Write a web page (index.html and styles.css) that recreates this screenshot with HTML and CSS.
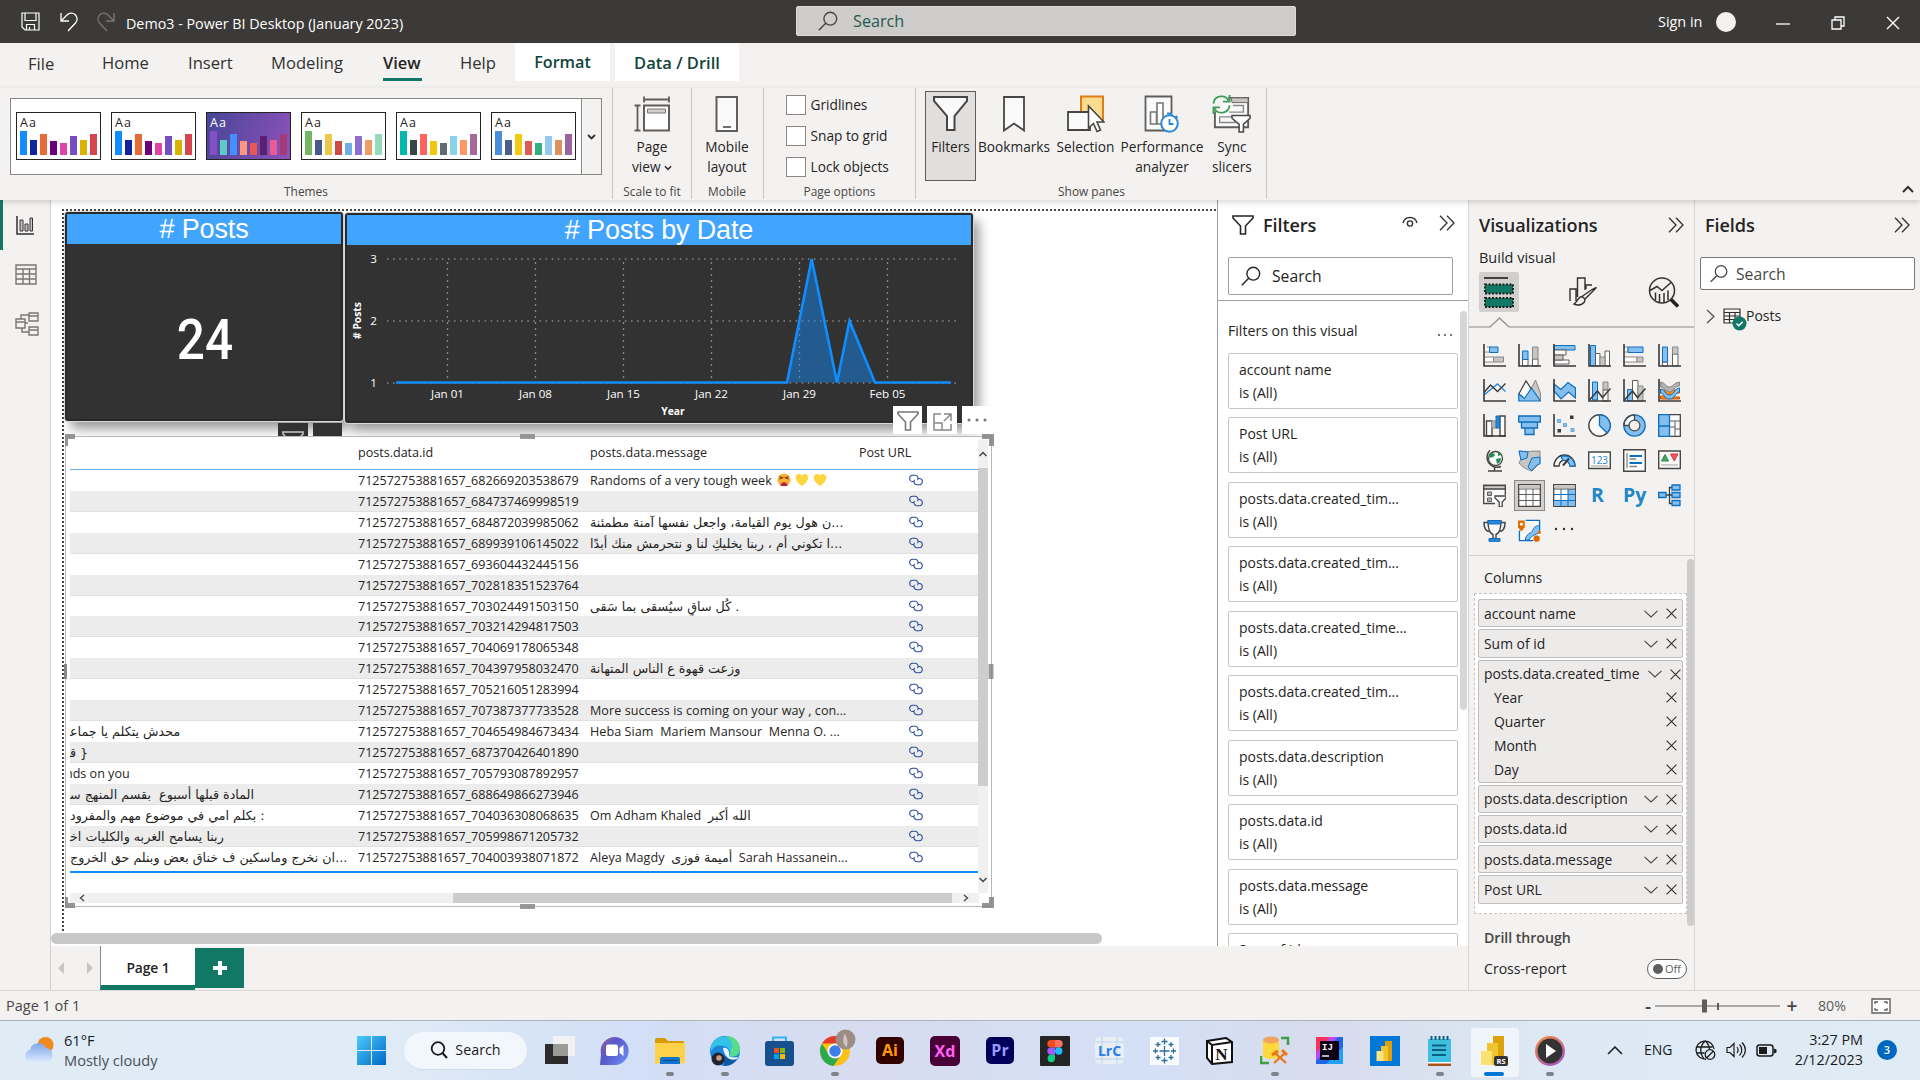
FILE: index.html
```html
<!DOCTYPE html>
<html lang="en">
<head>
<meta charset="utf-8">
<title>Demo3 - Power BI Desktop (January 2023)</title>
<link rel="stylesheet" href="styles.css">
</head>
<body>
<svg class="defs" width="0" height="0">
  <symbol id="search" viewBox="0 0 20 20"><circle cx="12.3" cy="7.7" r="6.4" fill="none" stroke="currentColor" stroke-width="1.4"/><path d="M7.7 12.3L.8 19.2" stroke="currentColor" stroke-width="1.5" fill="none"/></symbol>
  <symbol id="dbl" viewBox="0 0 16 16"><path d="M1 .8l7 7.2-7 7.2M8 .8L15 8l-7 7.2" fill="none" stroke="#323130" stroke-width="1.3"/></symbol>
  <symbol id="down" viewBox="0 0 14 8"><path d="M.5 .8L7 7l6.500-6.200" fill="none" stroke="#484644" stroke-width="1.100"/></symbol>
  <symbol id="x" viewBox="0 0 11 11"><path d="M.6 .6l9.800 9.800M10.400 .6L.6 10.400" fill="none" stroke="#323130" stroke-width="1.100"/></symbol>
  <symbol id="funnel" viewBox="0 0 36 36"><path d="M1 1.500h33v4L21.500 20.500V34.500h-7.500V20.500L1 5.500z" fill="#fafafa" stroke="#484644" stroke-width="2"/></symbol>
  <symbol id="funnel-sm" viewBox="0 0 22 20"><path d="M1 1h20v2l-7.500 8v8h-5v-8L1 3z" fill="none" stroke="currentColor" stroke-width="1.600"/></symbol>
  <symbol id="link" viewBox="0 0 14 12"><g fill="none" stroke="#2b4a9b" stroke-width="1.100"><path d="M5 7.500H3.800A3.100 3.100 0 0 1 3.800 1.300H6.500A3.100 3.100 0 0 1 8.500 6.200"/><path d="M9 4.500h1.200a3.100 3.100 0 0 1 0 6.200H7.500A3.100 3.100 0 0 1 5.500 5.800"/></g></symbol>

  <symbol id="v-sbar" viewBox="0 0 23 23"><path d="M4 3h4v5H1.500M1.500 13h9v5h-9" fill="#fff" stroke="#8a8886"/><path d="M6.500 3h8.500v5.500H6.500z" fill="#83bfef" stroke="#106ebe"/><path d="M10.500 13h10v5h-10z" fill="#c8c6c4" stroke="#8a8886"/><path d="M1 0v22h22" class="ax"/></symbol>
  <symbol id="v-scol" viewBox="0 0 23 23"><path d="M4.500 15h5.500v7H4.500zM14.500 15h5.500v7h-5.500z" fill="#fff" stroke="#605e5c"/><path d="M4.500 7H10v8.500H4.500z" fill="#83bfef" stroke="#106ebe"/><path d="M14.500 3h5.500v12h-5.500z" fill="#c8c6c4" stroke="#8a8886"/><path d="M1 0v22h22" class="ax"/></symbol>
  <symbol id="v-cbar" viewBox="0 0 23 23"><path d="M1 1.500h21v4.500H1z" fill="#83bfef" stroke="#106ebe"/><path d="M1 6h12v5H1zM1 16h15v4H1z" fill="#fff" stroke="#605e5c"/><path d="M1 11h9v5H1z" fill="#c8c6c4" stroke="#605e5c"/><path d="M1 0v22h22" class="ax"/></symbol>
  <symbol id="v-ccol" viewBox="0 0 23 23"><path d="M2.500 1.500h5V22h-5z" fill="#83bfef" stroke="#106ebe"/><path d="M7.500 9.500h4.500V22H7.500zM17 7h4.500v15H17z" fill="#fff" stroke="#605e5c"/><path d="M12 13h5v9h-5z" fill="#c8c6c4" stroke="#8a8886"/><path d="M1 0v22h22" class="ax"/></symbol>
  <symbol id="v-hbar" viewBox="0 0 23 23"><path d="M1 3h4v5H1M1 13h13v5H1" fill="#fff" stroke="#8a8886"/><path d="M5 3h15v5.500H5z" fill="#83bfef" stroke="#106ebe"/><path d="M14 13h6v5h-6z" fill="#c8c6c4" stroke="#8a8886"/><path d="M1 0v22h22" class="ax"/></symbol>
  <symbol id="v-hcol" viewBox="0 0 23 23"><path d="M4.500 18h5v4h-5zM14.500 10h5.500v12h-5.500z" fill="#fff" stroke="#605e5c"/><path d="M4.500 3h5v15h-5z" fill="#83bfef" stroke="#106ebe"/><path d="M14.500 3h5.500v7h-5.500z" fill="#c8c6c4" stroke="#8a8886"/><path d="M1 0v22h22" class="ax"/></symbol>
  <symbol id="v-line" viewBox="0 0 23 23"><path d="M1 16L14.500 5l8 7.500" fill="none" stroke="#2b88d8" stroke-width="1.400"/><path d="M1 13.500L7.500 6l7 6.500 8-8" fill="none" stroke="#3b3a39" stroke-width="1.400"/><path d="M1 0v22h22" class="ax"/></symbol>
  <symbol id="v-area" viewBox="0 0 23 23"><path d="M12 12L17.500 1 22.500 14v8z" fill="#c8c6c4" stroke="#8a8886"/><path d="M.8 15L8 2l6 9-7 9z" fill="#fff" stroke="#3b3a39" stroke-width="1.200"/><path d="M.8 22v-7L6.500 19.500 13.500 9 22.500 22z" fill="#83bfef" stroke="#106ebe" stroke-width="1.200"/></symbol>
  <symbol id="v-sarea" viewBox="0 0 23 23"><path d="M1 5l7 5.500 7-7L22.500 9v10l-7-6-7.500 7-7-8z" fill="#83bfef" stroke="#106ebe" stroke-width="1.200"/><path d="M1 0v22h22" class="ax"/></symbol>
  <symbol id="v-lcol" viewBox="0 0 23 23"><path d="M4.500 3h5v18h-5z" fill="#83bfef" stroke="#106ebe"/><path d="M15 3h5v8h-5z" fill="#c8c6c4" stroke="#8a8886"/><path d="M15 11h5v11h-5z" fill="#fff" stroke="#605e5c"/><path d="M1 21.500L9.500 12l5 6.500 8-9" fill="none" stroke="#3b3a39" stroke-width="1.500"/><path d="M1 0v22h22" class="ax"/></symbol>
  <symbol id="v-lccol" viewBox="0 0 23 23"><path d="M4.500 10.500H9.500V22h-5z" fill="#83bfef" stroke="#106ebe"/><path d="M9.500 1.500h5.500V22H9.500z" fill="#fff" stroke="#605e5c"/><path d="M15 7h5v15h-5z" fill="#c8c6c4" stroke="#8a8886"/><path d="M1 21.500L9.500 12l5 6.500 8-9" fill="none" stroke="#3b3a39" stroke-width="1.500"/><path d="M1 0v22h22" class="ax"/></symbol>
  <symbol id="v-ribbon" viewBox="0 0 23 23"><path d="M2.500 11h5l4 2 4-2h6v3h-5v4h5v2H2.500v-3h5v-3h-5z" fill="#ff8c00" stroke="#ca5010"/><path d="M2.500 3c4 0 5 5 9 5s5-5 10-5v4c-5 0-6 6-10 6s-5-5-9-5z" fill="#b3b0ad" stroke="#8a8886"/><path d="M2.500 10c5 0 4 6 9 6s5-7 10-7v4c-4 0-4 7-10 7s-5-6-9-6z" fill="#83bfef" stroke="#106ebe"/><path d="M1 0v22h22" class="ax"/></symbol>
  <symbol id="v-wfall" viewBox="0 0 23 23"><path d="M3.500 7H9v15H3.500zM17 2h5v20h-5z" fill="#fff" stroke="#484644" stroke-width="1.400"/><path d="M8.500 7h5v7h-5z" fill="#b3b0ad" stroke="#8a8886"/><path d="M13 2h3.500v12H13z" fill="#2b88d8" stroke="#106ebe"/><path d="M1 0v22h22" class="ax"/></symbol>
  <symbol id="v-fun" viewBox="0 0 23 23"><path d="M.7 2h21.600v6H.7zM3.500 8h16v6h-16zM7 14h9v6.500H7z" fill="#83bfef" stroke="#106ebe" stroke-width="1.300"/></symbol>
  <symbol id="v-scat" viewBox="0 0 23 23"><path d="M17 1.500h3.500V5H17zM4.500 15H8v3.500H4.500z" fill="#3b3a39"/><path d="M4.500 5.500h3v3h-3zM10.500 9.500h3v3h-3zM18 14.500h3v3h-3z" fill="#83bfef" stroke="#5ea8e0"/><path d="M1 0v22h22" class="ax"/></symbol>
  <symbol id="v-pie" viewBox="0 0 23 23"><circle cx="11.500" cy="11.500" r="10.700" fill="#fafafa" stroke="#484644" stroke-width="1.400"/><path d="M11.500 .8a10.700 10.700 0 0 1 7.600 18.200L11.500 11.500z" fill="#83bfef" stroke="#106ebe" stroke-width="1.300"/></symbol>
  <symbol id="v-donut" viewBox="0 0 23 23"><circle cx="11.500" cy="11.500" r="8" fill="none" stroke="#83bfef" stroke-width="5"/><path d="M2.500 11.500a9 9 0 0 1 8.500-8" fill="none" stroke="#fafafa" stroke-width="5"/><circle cx="11.500" cy="11.500" r="10.700" fill="none" stroke="#106ebe" stroke-width="1.300"/><path d="M.8 11.500A10.700 10.700 0 0 1 11.500 .8v5.200M.8 11.500H6" fill="none" stroke="#484644" stroke-width="1.300"/><circle cx="11.500" cy="11.500" r="5.400" fill="#f3f2f1" stroke="#484644" stroke-width="1.200"/></symbol>
  <symbol id="v-tree" viewBox="0 0 23 23"><path d="M.7 .7h21.600v21.600H.7z" fill="#fafafa" stroke="#484644" stroke-width="1.300"/><path d="M.7 .7h10.800v21.600H.7zM.7 12h10.800" fill="#83bfef" stroke="#106ebe" stroke-width="1.300"/><path d="M11.500 7h11M17 7v15M17 15h5.500M11.500 13H17" stroke="#605e5c" fill="none"/></symbol>
  <symbol id="v-map" viewBox="0 0 23 23"><circle cx="12.500" cy="9.500" r="7" fill="#fff" stroke="#484644" stroke-width="1.300"/><path d="M9 4c3 0 4 3 1 4S7 9 6.500 8s1-4 2.500-4zM13 10l5-1c0 3-1 5-4 6zM15 3l3 3-3 1z" fill="#218d51"/><path d="M7 1.200A10 10 0 0 0 18 17.500M11.500 18v3.500M5 22h14" fill="none" stroke="#484644" stroke-width="1.500"/></symbol>
  <symbol id="v-fmap" viewBox="0 0 23 23"><path d="M1 2c6 1 15 0 21 0v12l-8 8c-4-1-9-3-13-8l2-4z" fill="#c8c6c4" stroke="#8a8886"/><path d="M1 2l9 1-1 6-6 2zM14 9l8-1v7c-3 0-7 4-8 7l-4-4z" fill="#83bfef" stroke="#106ebe"/></symbol>
  <symbol id="v-gauge" viewBox="0 0 23 23"><path d="M1 17A10.500 11 0 0 1 22 17H17A5.500 6 0 0 0 6 17z" fill="#fafafa" stroke="#3b3a39" stroke-width="1.300"/><path d="M8 7.500A10.500 11 0 0 1 22 17H17A6 6 0 0 0 10 11.500z" fill="#83bfef" stroke="#106ebe" stroke-width="1.200"/><path d="M10 16.500l6-7" stroke="#3b3a39" stroke-width="2"/></symbol>
  <symbol id="v-multi" viewBox="0 0 23 23"><path d="M.7 .7h21.600v21.600H.7z" fill="#fafafa" stroke="#484644" stroke-width="1.400"/><path d="M6.500 7H19M6.500 14H19" stroke="#106ebe" stroke-width="2"/><path d="M6.500 10H13M6.500 17.500H14M4 4v15" stroke="#8a8886" stroke-width="1.300"/></symbol>
  <symbol id="v-kpi" viewBox="0 0 23 23"><path d="M.7 2h21.600v17.500H.7z" fill="#fafafa" stroke="#484644" stroke-width="1.400"/><path d="M3.500 12L7 5.500 10.500 12z" fill="#4ea35c" stroke="#218d51"/><path d="M12.500 5h7.500l-3.700 7z" fill="#f0575c" stroke="#d13438"/><path d="M3 16h17" stroke="#a19f9d"/></symbol>
  <symbol id="v-slicer" viewBox="0 0 23 23"><path d="M12 19.500H.7V1.500h21.600V11" fill="#fafafa" stroke="#484644" stroke-width="1.300"/><path d="M.7 1.500h21.600V5H.7z" fill="#d2d0ce" stroke="#484644" stroke-width="1.300"/><path d="M4.500 8h4v3.500h-4zM4.500 14h4v3.500h-4z" fill="#b3b0ad" stroke="#605e5c"/><path d="M12 12h11v2l-3.800 4v5h-3v-5L12 14z" fill="#fafafa" stroke="#484644" stroke-width="1.300"/></symbol>
  <symbol id="v-table" viewBox="0 0 23 23"><path d="M.7 .7h21.600v21.600H.7z" fill="#fff" stroke="#484644" stroke-width="1.300"/><path d="M.7 5h21.600M8 5v17M15 5v17M1 10.500h21M1 16.500h21" stroke="#605e5c" fill="none"/><path d="M1 2.800h21" stroke="#c8c6c4" stroke-width="2.500"/></symbol>
  <symbol id="v-matrix" viewBox="0 0 23 23"><path d="M.7 .7h21.600v21.600H.7z" fill="#fff" stroke="#484644" stroke-width="1.300"/><path d="M15 5h7v17H15zM1 16.500h14V22H1z" fill="#83bfef"/><path d="M8 5v17M15 5v17M1 10.500h21M1 16.500h21" stroke="#106ebe" fill="none"/><path d="M.7 5h21.600" stroke="#484644"/><path d="M1 2.800h21" stroke="#c8c6c4" stroke-width="2.500"/></symbol>
  <symbol id="v-decomp" viewBox="0 0 23 23"><path d="M8 11h6M14 3.500h-2.500v16H14" fill="none" stroke="#3b3a39" stroke-width="1.300"/><path d="M.7 8.500H8v5H.7zM14 1h8v5h-8zM14 8.500h8v5h-8zM14 16.500h8v5h-8z" fill="#83bfef" stroke="#106ebe" stroke-width="1.300"/></symbol>
  <symbol id="v-goal" viewBox="0 0 23 23"><path d="M5 3.500H1c0 5 1.500 9 6 9M18 3.500h4c0 5-1.500 9-6 9" fill="none" stroke="#484644" stroke-width="1.500"/><path d="M5 2h13c0 6-1 12-5 13.500v4h-3v-4C6 14 5 8 5 2z" fill="#fafafa" stroke="#484644" stroke-width="1.400"/><path d="M5 1.500h13V5H5zM6 19.500h11v2.800H6z" fill="#2b88d8" stroke="#106ebe"/></symbol>
  <symbol id="v-arc" viewBox="0 0 24 24"><path d="M8 1.500h14.500V12M16 22.500H1.500V12" fill="#fafafa" stroke="#106ebe" stroke-width="1.400"/><path d="M22.500 7c-6 0-6 3-8 6s-6 2-7 9h4c3-7 9-4 11-10z" fill="#83bfef" stroke="#106ebe"/><path d="M0 1.500h7v7L3.500 13 0 8.500z" fill="#e06c00"/><circle cx="3.500" cy="5.500" r="1.500" fill="#fff"/><circle cx="19.500" cy="20.500" r="3.300" fill="#e06c00"/><circle cx="22.300" cy="14" r="1.700" fill="#e06c00"/></symbol>
</svg>

<header class="titlebar">
  <div class="quick">
    <svg width="20" height="20" viewBox="0 0 20 20" fill="none" stroke="#fff" stroke-width="1.200"><path d="M1 1h17v17H4l-3-3zM4 1v7.500h11V1M5.500 18v-5.500h8V18M8.500 18v-3"/></svg>
    <svg width="18" height="20" viewBox="0 0 18 20" fill="none" stroke="#fff" stroke-width="1.300"><path d="M1 1v8h8M1 9l6-6a5.800 5.800 0 0 1 8.500 8L8 19"/></svg>
    <svg width="18" height="20" viewBox="0 0 18 20" fill="none" stroke="#797775" stroke-width="1.300"><path d="M17 1v8H9M17 9l-6-6a5.800 5.800 0 0 0-8.500 8L10 19"/></svg>
  </div>
  <div class="app-title">Demo3 - Power BI Desktop (January 2023)</div>
  <div class="top-search"><svg width="20" height="20"><use href="#search"/></svg><span>Search</span></div>
  <div class="sign">Sign in</div><i class="avatar"></i>
  <div class="win">
    <svg width="14" height="16" viewBox="0 0 14 16" stroke="#fff" stroke-width="1.300"><path d="M0 9h14"/></svg>
    <svg width="14" height="16" viewBox="0 0 14 16" stroke="#fff" stroke-width="1.300" fill="none"><path d="M1 5h9v9H1zM4 5V2h9v9h-3"/></svg>
    <svg width="14" height="16" viewBox="0 0 14 16" stroke="#fff" stroke-width="1.400"><path d="M1 2l12 12M13 2L1 14"/></svg>
  </div>
</header>

<nav class="tabs">
  <span class="t-file">File</span><span class="t-home">Home</span><span class="t-ins">Insert</span><span class="t-mod">Modeling</span><span class="t-view">View</span><span class="t-help">Help</span><b class="t-fmt">Format</b><b class="t-data">Data / Drill</b>
</nav>

<section class="ribbon">
  <div class="grp g-themes">
    <div class="gallery">
      <div class="thumb"><em>Aa</em><svg width="79" height="24"><path fill="#118dff" d="M0 0h7v24H0z"/><path fill="#12239e" d="M10 9h7v15h-7z"/><path fill="#e66c37" d="M20 3h7v21h-7z"/><path fill="#6b007b" d="M30 10h7v14h-7z"/><path fill="#e044a7" d="M40 12h7v12h-7z"/><path fill="#744ec2" d="M50 5h7v19h-7z"/><path fill="#d9b300" d="M60 9h7v15h-7z"/><path fill="#d64550" d="M70 3h7v21h-7z"/></svg></div>
      <div class="thumb"><em>Aa</em><svg width="79" height="24"><path fill="#118dff" d="M0 0h7v24H0z"/><path fill="#12239e" d="M10 9h7v15h-7z"/><path fill="#e66c37" d="M20 3h7v21h-7z"/><path fill="#6b007b" d="M30 10h7v14h-7z"/><path fill="#e044a7" d="M40 12h7v12h-7z"/><path fill="#744ec2" d="M50 5h7v19h-7z"/><path fill="#d9b300" d="M60 9h7v15h-7z"/><path fill="#d64550" d="M70 3h7v21h-7z"/></svg></div>
      <div class="thumb purple"><em>Aa</em><svg width="79" height="24"><path fill="#8250c4" d="M0 0h7v24H0z"/><path fill="#5ecbc8" d="M10 9h7v15h-7z"/><path fill="#438fff" d="M20 3h7v21h-7z"/><path fill="#ff977e" d="M30 10h7v14h-7z"/><path fill="#eb5757" d="M40 12h7v12h-7z"/><path fill="#5b2071" d="M50 5h7v19h-7z"/><path fill="#ec5a96" d="M60 9h7v15h-7z"/><path fill="#a43b76" d="M70 3h7v21h-7z"/></svg></div>
      <div class="thumb"><em>Aa</em><svg width="79" height="24"><path fill="#73b761" d="M0 0h7v24H0z"/><path fill="#4a588a" d="M10 9h7v15h-7z"/><path fill="#ecc846" d="M20 3h7v21h-7z"/><path fill="#cd4c46" d="M30 10h7v14h-7z"/><path fill="#71afe2" d="M40 12h7v12h-7z"/><path fill="#8d6fd1" d="M50 5h7v19h-7z"/><path fill="#ee9e64" d="M60 9h7v15h-7z"/><path fill="#95dabb" d="M70 3h7v21h-7z"/></svg></div>
      <div class="thumb"><em>Aa</em><svg width="79" height="24"><path fill="#01b8aa" d="M0 0h7v24H0z"/><path fill="#374649" d="M10 9h7v15h-7z"/><path fill="#fd625e" d="M20 3h7v21h-7z"/><path fill="#f2c80f" d="M30 10h7v14h-7z"/><path fill="#5f6b6d" d="M40 12h7v12h-7z"/><path fill="#8ad4eb" d="M50 5h7v19h-7z"/><path fill="#fe9666" d="M60 9h7v15h-7z"/><path fill="#a66999" d="M70 3h7v21h-7z"/></svg></div>
      <div class="thumb"><em>Aa</em><svg width="79" height="24"><path fill="#4a8ddc" d="M0 0h7v24H0z"/><path fill="#4c5d8a" d="M10 9h7v15h-7z"/><path fill="#f3c911" d="M20 3h7v21h-7z"/><path fill="#dc5b57" d="M30 10h7v14h-7z"/><path fill="#33ae81" d="M40 12h7v12h-7z"/><path fill="#95c8f0" d="M50 5h7v19h-7z"/><path fill="#dd915f" d="M60 9h7v15h-7z"/><path fill="#9a64a0" d="M70 3h7v21h-7z"/></svg></div>
      <div class="more"><svg width="9" height="6" viewBox="0 0 9 6"><path d="M1 1l3.500 3.500L8 1" fill="none" stroke="#323130" stroke-width="1.800"/></svg></div>
    </div>
    <div class="glabel">Themes</div>
  </div>
  <div class="grp g-scale">
    <div class="rb"><svg width="36" height="37" viewBox="0 0 36 37"><path d="M10 10h25v25H10z" fill="#fff" stroke="#605e5c" stroke-width="2"/><path d="M13.500 13.500h18v4h-18z" fill="#d2d0ce" stroke="#797775"/><path d="M10 4h25M10 1v6M35 1v6M3.500 10v25M.5 10h6M.5 35h6" stroke="#605e5c" stroke-width="1.800" fill="none"/></svg><span>Page<br>view <svg width="8" height="6" viewBox="0 0 9 6"><path d="M1 1l3.500 3.500L8 1" fill="none" stroke="#323130" stroke-width="1.800"/></svg></span></div>
    <div class="glabel">Scale to fit</div>
  </div>
  <div class="grp g-mobile">
    <div class="rb"><svg width="24" height="37" viewBox="0 0 24 37"><path d="M1.500 1.500h20.500v34H1.500z" fill="#fafafa" stroke="#605e5c" stroke-width="2"/><path d="M8 31.500h8" stroke="#605e5c" stroke-width="1.800"/></svg><span>Mobile<br>layout</span></div>
    <div class="glabel">Mobile</div>
  </div>
  <div class="grp g-opts">
    <div class="checks"><label><i></i>Gridlines</label><label><i></i>Snap to grid</label><label><i></i>Lock objects</label></div>
    <div class="glabel">Page options</div>
  </div>
  <div class="grp g-panes">
    <div class="panes">
      <div class="rb on w-fil"><svg width="36" height="37"><use href="#funnel" width="36" height="37"/></svg><span>Filters</span></div>
      <div class="rb w-book"><svg width="24" height="37" viewBox="0 0 24 37"><path d="M2 1.500h20v33.500L12 28 2 35z" fill="#fafafa" stroke="#484644" stroke-width="1.800"/></svg><span>Bookmarks</span></div>
      <div class="rb w-sel"><svg width="38" height="38" viewBox="0 0 38 38"><path d="M14 1.500h22v24H14z" fill="#f9dc8f" stroke="#e07f16" stroke-width="2"/><path d="M1 17h22v18H1z" fill="#fafafa" stroke="#484644" stroke-width="1.800"/><path d="M21.500 11v22l5-4.500 3.500 8 3.500-1.500-3.500-8h7z" fill="#fff" stroke="#484644" stroke-width="1.600"/></svg><span>Selection</span></div>
      <div class="rb w-perf"><svg width="36" height="38" viewBox="0 0 36 38"><path d="M1.500 1.500h26v34h-26z" fill="#fafafa" stroke="#605e5c" stroke-width="1.800"/><path d="M6.500 17h6v12h-6zM13 8h6v21h-6z" fill="#fff" stroke="#797775" stroke-width="1.600"/><circle cx="25.500" cy="28.500" r="8.300" fill="#fff" stroke="#2b88d8" stroke-width="2"/><path d="M25.500 24v5h4M23 18.500h5M31.500 21l2 2" stroke="#2b88d8" stroke-width="1.800" fill="none"/></svg><span>Performance<br>analyzer</span></div>
      <div class="rb w-sync"><svg width="42" height="40" viewBox="0 0 42 40"><path d="M17 3h21v31H3V17" fill="#fafafa" stroke="#605e5c" stroke-width="2"/><path d="M20 3h18v5H21z" fill="#c8c6c4" stroke="#605e5c"/><path d="M18 18h15v-7H22M8 23h16v6H8z" fill="none" stroke="#8a8886" stroke-width="1.500"/><path d="M21 21.500h19v3l-7 6.500v8h-4.500v-8L21 24.500z" fill="#fff" stroke="#484644" stroke-width="1.600"/><path d="M1.500 9a8.500 8.500 0 0 1 16-3M18.500 11a8.500 8.500 0 0 1-16 3M18.500 0v7h-7M1.500 20v-7h7" fill="none" stroke="#3f9b57" stroke-width="1.900"/></svg><span>Sync<br>slicers</span></div>
    </div>
    <div class="glabel">Show panes</div>
  </div>
  <svg class="collapse" width="12" height="8" viewBox="0 0 12 8"><path d="M1 7l5-5 5 5" fill="none" stroke="#323130" stroke-width="2"/></svg>
</section>

<main class="work">
  <aside class="rail">
    <div class="ritem on"><svg width="18" height="19" viewBox="0 0 18 19"><path d="M1 0v18h17" fill="none" stroke="#323130" stroke-width="1.500"/><path d="M4 4h3v11H4zM9 8h3v7H9zM14 2h2.500v13H14z" fill="#c8c6c4" stroke="#323130"/></svg></div>
    <div class="ritem"><svg width="22" height="21" viewBox="0 0 22 21"><path d="M1 1h20v19H1zM1 5h20M1 10h20M1 15h20M8 5v15M14.500 5v15" fill="none" stroke="#797775" stroke-width="1.400"/></svg></div>
    <div class="ritem"><svg width="24" height="24" viewBox="0 0 24 24"><path d="M1 7h9v9H1zM1 10h9M14 1h9v8h-9zM14 4h9M14 15h9v8h-9zM14 18h9M10 11h3M6 7V3h8M7 16v4h7" fill="none" stroke="#797775" stroke-width="1.400"/></svg></div>
  </aside>

  <div class="center">
    <div class="upper">
      <div class="canvas">
        <div class="pageframe"></div>
        <div class="visual v-count"><h2>#&nbsp;Posts</h2><div class="big">24</div></div>
        <div class="visual v-chart"><h2># Posts by Date</h2>
          <svg width="626" height="176" viewBox="346 246 626 176">
            <g stroke="#8a8886" stroke-width="1.400" stroke-dasharray="1.500 4.600"><path d="M387 259h572M387 321h572M387 383h572"/></g>
            <g stroke="#8a8886" stroke-width="1.300" stroke-dasharray="2 4"><path d="M447.500 262v118M535.500 262v118M623.500 262v118M711.500 262v118M799.500 262v118M887.500 262v118"/></g>
            <path d="M787 382.500L811.700 259 837 382.500 849.500 321 875 382.500z" fill="#118dff" fill-opacity=".45"/>
            <path d="M396 382.500H787L811.700 259 837 382.500 849.500 321 875 382.500H951" fill="none" stroke="#118dff" stroke-width="2.600"/>
            <g class="ct"><text x="373.500" y="263">3</text><text x="373.500" y="325">2</text><text x="373.500" y="387">1</text><text x="447.500" y="398">Jan 01</text><text x="535.500" y="398">Jan 08</text><text x="623.500" y="398">Jan 15</text><text x="711.500" y="398">Jan 22</text><text x="799.500" y="398">Jan 29</text><text x="887.500" y="398">Feb 05</text></g>
            <g class="ct bold"><text x="673" y="415">Year</text><text transform="translate(360.500 320.500) rotate(-90)">#&#160;Posts</text></g>
          </svg>
        </div>
        <div class="vbtn dark b1"><svg width="22" height="20"><use href="#funnel-sm"/></svg></div><div class="vbtn dark b2"></div>
        <div class="vbtn b3"><svg width="22" height="20"><use href="#funnel-sm"/></svg></div>
        <div class="vbtn b4"><svg width="19" height="18" viewBox="0 0 19 18"><path d="M8 1H1v16h17v-6M1 10h8v7M11 1h7v7M18 1l-7 7" fill="none" stroke="#8a8886" stroke-width="1.500"/></svg></div>
        <div class="vbtn b5"><svg width="20" height="4"><g fill="#797775"><circle cx="2" cy="2" r="1.500"/><circle cx="10" cy="2" r="1.500"/><circle cx="18" cy="2" r="1.500"/></g></svg></div>

        <div class="tablevis">
          <div class="tv-main">
            <div class="grid">
              <div class="row head"><span></span><span>posts.data.id</span><span>posts.data.message</span><span class="lh">Post URL</span></div>
              <div class="rows">
              <div class="row"><span></span><span>712572753881657_682669203538679</span><span>Randoms of a very tough week <svg class="emo" width="50" height="14" viewBox="0 0 50 14"><circle cx="7" cy="7" r="6.500" fill="#fbb034"/><path d="M3.500 13c0-5 7-5 7 0z" fill="#b3264c"/><path d="M2.500 3.500l3 1.200-3 1.300M11.500 3.500l-3 1.200 3 1.300" fill="none" stroke="#7a3a10" stroke-width="1.100"/><path d="M25 13C15 6 19 .5 22.500 1c1.600.2 2.500 1.800 2.500 1.800S26 1.200 27.500 1C31 .5 35 6 25 13z" fill="#fcd53f"/><path d="M43 13C33 6 37 .5 40.500 1c1.600.2 2.500 1.800 2.500 1.800S44 1.200 45.500 1C49 .5 53 6 43 13z" fill="#fcd53f"/></svg></span><span><svg width="14" height="12"><use href="#link"/></svg></span></div>
              <div class="row"><span></span><span>712572753881657_684737469998519</span><span></span><span><svg width="14" height="12"><use href="#link"/></svg></span></div>
              <div class="row"><span></span><span>712572753881657_684872039985062</span><span><bdo class="ar" dir="ltr"><bdi>ن هول يوم القيامة، واجعل نفسها آمنة مطمئنة</bdi>...</bdo></span><span><svg width="14" height="12"><use href="#link"/></svg></span></div>
              <div class="row"><span></span><span>712572753881657_689939106145022</span><span><bdo class="ar" dir="ltr"><bdi>ا تكوني أم ، ربنا يخليكِ لنا و نتحرمش منك أبدًا</bdi>...</bdo></span><span><svg width="14" height="12"><use href="#link"/></svg></span></div>
              <div class="row"><span></span><span>712572753881657_693604432445156</span><span></span><span><svg width="14" height="12"><use href="#link"/></svg></span></div>
              <div class="row"><span></span><span>712572753881657_702818351523764</span><span></span><span><svg width="14" height="12"><use href="#link"/></svg></span></div>
              <div class="row"><span></span><span>712572753881657_703024491503150</span><span><i class="ar">كُل ساقٍ سيُسقى بما سَقى .</i></span><span><svg width="14" height="12"><use href="#link"/></svg></span></div>
              <div class="row"><span></span><span>712572753881657_703214294817503</span><span></span><span><svg width="14" height="12"><use href="#link"/></svg></span></div>
              <div class="row"><span></span><span>712572753881657_704069178065348</span><span></span><span><svg width="14" height="12"><use href="#link"/></svg></span></div>
              <div class="row"><span></span><span>712572753881657_704397958032470</span><span><i class="ar">وزعت قهوة ع الناس المتهانة</i></span><span><svg width="14" height="12"><use href="#link"/></svg></span></div>
              <div class="row"><span></span><span>712572753881657_705216051283994</span><span></span><span><svg width="14" height="12"><use href="#link"/></svg></span></div>
              <div class="row"><span></span><span>712572753881657_707387377733528</span><span>More success is coming on your way , con...</span><span><svg width="14" height="12"><use href="#link"/></svg></span></div>
              <div class="row"><span><i class="ar">محدش يتكلم يا جماع&zwj;</i></span><span>712572753881657_704654984673434</span><span>Heba Siam&nbsp; Mariem Mansour&nbsp; Menna O. ...</span><span><svg width="14" height="12"><use href="#link"/></svg></span></div>
              <div class="row"><span><i class="ar">ق&zwj; }</i></span><span>712572753881657_687370426401890</span><span></span><span><svg width="14" height="12"><use href="#link"/></svg></span></div>
              <div class="row"><span><i class="cut">nds on you</i></span><span>712572753881657_705793087892957</span><span></span><span><svg width="14" height="12"><use href="#link"/></svg></span></div>
              <div class="row"><span><i class="ar">المادة قبلها أسبوع&nbsp; بقسم المنهج س&zwj;</i></span><span>712572753881657_688649866273946</span><span></span><span><svg width="14" height="12"><use href="#link"/></svg></span></div>
              <div class="row"><span><i class="ar">بكلم امي في موضوع مهم والمفرود :</i></span><span>712572753881657_704036308068635</span><span>Om Adham Khaled&nbsp; <i class="ar">الله أكبر</i></span><span><svg width="14" height="12"><use href="#link"/></svg></span></div>
              <div class="row"><span><i class="ar">ربنا يسامح الغربه والكليات اخ&zwj;</i></span><span>712572753881657_705998671205732</span><span></span><span><svg width="14" height="12"><use href="#link"/></svg></span></div>
              <div class="row"><span><i class="ar">ان نخرج وماسكين ف خناق بعض وبنلم حق الخروج...</i></span><span>712572753881657_704003938071872</span><span>Aleya Magdy&nbsp; <i class="ar">أميمة فوزى</i>&nbsp; Sarah Hassanein...</span><span><svg width="14" height="12"><use href="#link"/></svg></span></div>
              </div>
            </div>
            <div class="vs"><svg width="10" height="6" viewBox="0 0 10 6"><path d="M1.500 5L5 1.500 8.500 5" fill="none" stroke="#484644" stroke-width="1.500"/></svg><i></i><svg width="10" height="6" viewBox="0 0 10 6"><path d="M1.500 1L5 4.500 8.500 1" fill="none" stroke="#484644" stroke-width="1.500"/></svg></div>
          </div>
          <div class="hs"><svg width="6" height="8" viewBox="0 0 6 8"><path d="M5 1L1.500 4 5 7" fill="none" stroke="#484644" stroke-width="1.300"/></svg><i></i><svg width="6" height="8" viewBox="0 0 6 8"><path d="M1 1l3.500 3L1 7" fill="none" stroke="#484644" stroke-width="1.300"/></svg></div>
          <svg class="handles" width="932" height="476" viewBox="62 433 932 476"><g fill="none" stroke="#8a8886" stroke-width="5"><path d="M520 436.500h15M520 906.500h15M991 664v15" opacity=".85"/><path d="M65.500 664v15" stroke-width="3"/></g><path d="M65 446V434h10v5h-7v7zM982 434h12v12h-5v-7h-7zM994 897v11h-12v-5h7v-6zM65 897v11h10v-5h-7v-6z" fill="#8a8886" opacity=".9"/></svg>
        </div>
        <div class="cscroll"></div>
      </div>

      <section class="filters">
        <div class="ph fh"><svg width="22" height="20"><use href="#funnel-sm"/></svg><h3>Filters</h3><svg class="eye" width="16" height="14" viewBox="0 0 16 14"><path d="M1 8A7.200 7.200 0 0 1 15 8" fill="none" stroke="#323130" stroke-width="1.300"/><circle cx="8" cy="8.500" r="2.600" fill="none" stroke="#323130" stroke-width="1.400"/></svg><svg width="16" height="16"><use href="#dbl"/></svg></div>
        <div class="sbox"><svg width="20" height="20"><use href="#search"/></svg>Search</div>
        <div class="flist">
          <div class="fl-head"><span>Filters on this visual</span><svg width="16" height="4"><g fill="#484644"><circle cx="2" cy="2" r="1"/><circle cx="8" cy="2" r="1"/><circle cx="14" cy="2" r="1"/></g></svg></div>
          <div class="fc"><p>account name</p><p>is (All)</p></div>
          <div class="fc"><p>Post URL</p><p>is (All)</p></div>
          <div class="fc"><p>posts.data.created_tim...</p><p>is (All)</p></div>
          <div class="fc"><p>posts.data.created_tim...</p><p>is (All)</p></div>
          <div class="fc"><p>posts.data.created_time...</p><p>is (All)</p></div>
          <div class="fc"><p>posts.data.created_tim...</p><p>is (All)</p></div>
          <div class="fc"><p>posts.data.description</p><p>is (All)</p></div>
          <div class="fc"><p>posts.data.id</p><p>is (All)</p></div>
          <div class="fc"><p>posts.data.message</p><p>is (All)</p></div>
          <div class="fc"><p>Sum of id</p><p>is (All)</p></div>
          <i class="fscroll"></i>
        </div>
      </section>
    </div>
    <div class="pagebar">
      <svg width="49" height="14" viewBox="0 0 49 14"><path d="M13 1v12L7 7zM36 1v12l6-6z" fill="#c8c6c4"/></svg>
      <div class="ptab">Page 1</div>
      <div class="plus"><svg width="14" height="14" viewBox="0 0 14 14"><path d="M7 0v14M0 7h14" stroke="#fff" stroke-width="4"/></svg></div>
    </div>
  </div>

  <section class="viz">
    <div class="ph"><h3>Visualizations</h3><svg width="16" height="16"><use href="#dbl"/></svg></div>
    <div class="bv">Build visual</div>
    <div class="modes">
      <div class="mode on"><svg width="30" height="31" viewBox="0 0 30 31"><path d="M0 1h24" stroke="#323130" stroke-width="1.800"/><path d="M1 7.500h28v9H1zM1 21h28v9H1z" fill="#117865" stroke="#201f1e" stroke-width="2" stroke-dasharray="2 1.500"/></svg></div>
      <div class="mode"><svg width="29" height="30" viewBox="0 0 29 30"><path d="M1 24V12h6v12M8.500 20V1h7.500v12M17 12V8h6" fill="none" stroke="#323130" stroke-width="1.400"/><path d="M27.500 10.500L16 22l-3-2.500 10-7zM13 19.500c-4 0-4 5-8 7.500 4 2 11 1 11-5z" fill="#f3f2f1" stroke="#323130" stroke-width="1.400"/></svg></div>
      <div class="mode"><svg width="31" height="31" viewBox="0 0 31 31"><circle cx="14" cy="13.500" r="12.500" fill="none" stroke="#323130" stroke-width="1.500"/><path d="M2 13.500l7-4 5 4 9-8M7.500 15.500v7.500M11.500 17v8.500M16 16v9.500M20 13.500V23" fill="none" stroke="#323130" stroke-width="1.500"/><path d="M23 22.500l7 7" stroke="#201f1e" stroke-width="3.500"/></svg></div>
    </div>
    <svg class="notch" width="226" height="12" viewBox="0 0 226 12"><path d="M0 10H21l9.500-9L40 10H226" fill="none" stroke="#8a8886" stroke-width="1.200"/></svg>
    <div class="icons">
      <svg><use href="#v-sbar"/></svg><svg><use href="#v-scol"/></svg><svg><use href="#v-cbar"/></svg><svg><use href="#v-ccol"/></svg><svg><use href="#v-hbar"/></svg><svg><use href="#v-hcol"/></svg>
      <svg><use href="#v-line"/></svg><svg><use href="#v-area"/></svg><svg><use href="#v-sarea"/></svg><svg><use href="#v-lcol"/></svg><svg><use href="#v-lccol"/></svg><svg><use href="#v-ribbon"/></svg>
      <svg><use href="#v-wfall"/></svg><svg><use href="#v-fun"/></svg><svg><use href="#v-scat"/></svg><svg><use href="#v-pie"/></svg><svg><use href="#v-donut"/></svg><svg><use href="#v-tree"/></svg>
      <svg><use href="#v-map"/></svg><svg><use href="#v-fmap"/></svg><svg><use href="#v-gauge"/></svg><svg viewBox="0 0 23 23"><path d="M.7 3h21.600v16.500H.7z" fill="#fafafa" stroke="#484644" stroke-width="1.400"/><text x="11.500" y="14.500" class="num">123</text><path d="M3 17h17" stroke="#a19f9d"/></svg><svg><use href="#v-multi"/></svg><svg><use href="#v-kpi"/></svg>
      <svg><use href="#v-slicer"/></svg><svg class="sel"><use href="#v-table"/></svg><svg><use href="#v-matrix"/></svg><b>R</b><b>Py</b><svg><use href="#v-decomp"/></svg>
      <svg><use href="#v-goal"/></svg><svg><use href="#v-arc"/></svg><svg viewBox="0 0 23 23"><g fill="#323130"><circle cx="3" cy="10" r="1.200"/><circle cx="11" cy="10" r="1.200"/><circle cx="19" cy="10" r="1.200"/></g></svg>
    </div>
    <div class="wells">
      <div class="wl">Columns</div>
      <div class="drop">
        <div class="fp"><div><span>account name</span><svg width="14" height="8"><use href="#down"/></svg><svg width="11" height="11"><use href="#x"/></svg></div></div>
        <div class="fp"><div><span>Sum of id</span><svg width="14" height="8"><use href="#down"/></svg><svg width="11" height="11"><use href="#x"/></svg></div></div>
        <div class="fp multi"><div><span>posts.data.created_time</span><svg width="14" height="8"><use href="#down"/></svg><svg width="11" height="11"><use href="#x"/></svg></div>
          <div class="sub"><span>Year</span><svg width="11" height="11"><use href="#x"/></svg></div><div class="sub"><span>Quarter</span><svg width="11" height="11"><use href="#x"/></svg></div><div class="sub"><span>Month</span><svg width="11" height="11"><use href="#x"/></svg></div><div class="sub"><span>Day</span><svg width="11" height="11"><use href="#x"/></svg></div></div>
        <div class="fp"><div><span>posts.data.description</span><svg width="14" height="8"><use href="#down"/></svg><svg width="11" height="11"><use href="#x"/></svg></div></div>
        <div class="fp"><div><span>posts.data.id</span><svg width="14" height="8"><use href="#down"/></svg><svg width="11" height="11"><use href="#x"/></svg></div></div>
        <div class="fp"><div><span>posts.data.message</span><svg width="14" height="8"><use href="#down"/></svg><svg width="11" height="11"><use href="#x"/></svg></div></div>
        <div class="fp"><div><span>Post URL</span><svg width="14" height="8"><use href="#down"/></svg><svg width="11" height="11"><use href="#x"/></svg></div></div>
      </div>
      <div class="drill">Drill through</div>
      <div class="cross"><span>Cross-report</span><div class="toggle"><i></i>Off</div></div>
      <i class="wscroll"></i>
    </div>
  </section>

  <section class="fields">
    <div class="ph"><h3>Fields</h3><svg width="16" height="16"><use href="#dbl"/></svg></div>
    <div class="sbox"><svg width="18" height="19"><use href="#search"/></svg>Search</div>
    <div class="tree"><svg width="9" height="15" viewBox="0 0 9 15"><path d="M1 1l7 6.500L1 14" fill="none" stroke="#484644" stroke-width="1.100"/></svg><svg class="ti" width="24" height="23" viewBox="0 0 24 23"><path d="M1 1h16v14H1zM1 4.500h16M1 8h16M1 11.500h16M6.500 4v11M12 4v11" fill="none" stroke="#323130" stroke-width="1.200"/><circle cx="16.500" cy="15.500" r="7" fill="#117865"/><path d="M13.500 15.500l2.200 2.200 4-4" fill="none" stroke="#fff" stroke-width="1.600"/></svg><span>Posts</span></div>
  </section>
</main>

<footer class="status"><span>Page 1 of 1</span>
  <div class="zoomer"><b>-</b><svg width="125" height="16" viewBox="0 0 125 16"><path d="M0 8h125" stroke="#605e5c" stroke-width="1.200"/><path d="M47 1.500h5v13h-5zM62 5h2v7h-2z" fill="#605e5c"/></svg><b>+</b><span>80%</span><svg width="20" height="16" viewBox="0 0 20 16"><path d="M1 1h18v14H1z" fill="#fff" stroke="#605e5c" stroke-width="1.400"/><path d="M4 6V4h3M13 4h3v2M16 10v2h-3M7 12H4v-2" fill="none" stroke="#605e5c" stroke-width="1.300"/></svg></div>
</footer>

<div class="taskbar">
  <div class="weather"><svg width="31" height="28" viewBox="0 0 31 28"><defs><linearGradient id="cl" x1="0" y1="0" x2="0" y2="1"><stop offset="0" stop-color="#7da7ee"/><stop offset="1" stop-color="#dce9fb"/></linearGradient></defs><circle cx="21.500" cy="9" r="8" fill="#f08a1c"/><path d="M6 26a6.200 6.200 0 0 1 0-12 8.500 8.500 0 0 1 16-2 7.300 7.300 0 0 1 2 14z" fill="url(#cl)"/></svg><div>61°F<br><span>Mostly cloudy</span></div></div>
  <div class="tk win11"><svg width="29" height="29" viewBox="0 0 29 29"><defs><linearGradient id="wg" x1="0" y1="0" x2="1" y2="1"><stop offset="0" stop-color="#4ccbfb"/><stop offset="1" stop-color="#0067c8"/></linearGradient></defs><path d="M0 0h14v14H0zM15 0h14v14H15zM0 15h14v14H0zM15 15h14v14H15z" fill="url(#wg)"/></svg></div>
  <div class="pill"><svg width="18" height="18" viewBox="0 0 18 18"><circle cx="8" cy="7.500" r="6.300" fill="none" stroke="#1b1b1b" stroke-width="1.800"/><path d="M12.500 12l4.500 5" stroke="#1b1b1b" stroke-width="2"/></svg>Search</div>
  <div class="apps">
    <div class="tk"><svg width="30" height="29" viewBox="0 0 30 29"><path d="M0 8h23v20H0z" fill="#2b2b2b"/><path d="M8 0h22v20H8z" fill="#f2f2f2"/><path d="M8 8h15v12H8z" fill="#9a9a9a"/></svg></div>
    <div class="tk"><svg width="29" height="29" viewBox="0 0 29 29"><defs><linearGradient id="ch" x1="0" y1="0" x2="1" y2=".7"><stop offset="0" stop-color="#9a5fa0"/><stop offset=".45" stop-color="#5558c8"/><stop offset="1" stop-color="#6f86ee"/></linearGradient></defs><path d="M0 29L1 18A14 14 0 1 1 15 29z" fill="url(#ch)"/><rect x="6" y="8.500" width="12" height="11.500" rx="2" fill="#fff"/><path d="M19.500 12l4-3v11l-4-3z" fill="#fff"/></svg></div>
    <div class="tk run"><svg width="30" height="28" viewBox="0 0 30 28"><path d="M0 3a2 2 0 0 1 2-2h8l3 3h16v10H0z" fill="#d99a00"/><path d="M0 6h30v20.500H0z" fill="#ffd04a"/><path d="M5 27v-5a2 2 0 0 1 2-2h16a2 2 0 0 1 2 2v5z" fill="#1173cb"/><path d="M8 23.500h14" stroke="#0a4d8c" stroke-width="1.200"/></svg></div>
    <div class="tk run"><svg width="30" height="30" viewBox="0 0 30 30"><circle cx="15" cy="15" r="15" fill="#1b86d9"/><path d="M1 10C5-3 27-3 30 13c0 6-5 9-11 7 3-3 0-9-5-10S4 9 1 16z" fill="#35c2e8"/><path d="M16 0c9 0 14 6 14 13 0 6-6 9-11 7 2-2 2-4 1-6 4-2 2-10-4-14z" fill="#56dd8a"/><path d="M13 18c3 5 9 5 15 3-3 6-8 9-14 9z" fill="#0c59a4"/><path d="M13 12c5-1 7 4 6 8 3 2 6 1.500 9 1l-1 2c-6 2-12 0-14-11z" fill="#e8f2ff"/><circle cx="8" cy="23" r="6.500" fill="#20242c"/><circle cx="9" cy="22" r="2.800" fill="#c79a86"/></svg></div>
    <div class="tk"><svg width="29" height="30" viewBox="0 0 29 30"><path d="M8 7V1.500h13V7" fill="none" stroke="#2bb8f0" stroke-width="2"/><rect y="5" width="29" height="25" rx="3" fill="#17508f"/><path d="M9 12h5v5H9z" fill="#f25022"/><path d="M15 12h5v5h-5z" fill="#7fba00"/><path d="M9 18h5v5H9z" fill="#00a4ef"/><path d="M15 18h5v5h-5z" fill="#ffb900"/></svg></div>
    <div class="tk run"><svg class="up" width="36" height="37" viewBox="0 0 36 37"><circle cx="15" cy="22" r="15" fill="#fbc116"/><path d="M2 14.500A15 15 0 0 1 28 14.500H15z" fill="#e33b2e"/><path d="M2 14.500A15 15 0 0 0 13.500 37L21 25.500 8.500 25z" fill="#2da94f"/><circle cx="15" cy="22" r="7.500" fill="#fff"/><circle cx="15" cy="22" r="5.800" fill="#3f7de8"/><circle cx="25.500" cy="10.500" r="10" fill="#9b8c84"/><path d="M24.500 5c3 3 4 9 2 13-4-2-4-9-2-13z" fill="#cfc6bf"/></svg></div>
    <div class="tk"><svg width="28" height="28"><rect width="28" height="27" rx="5" fill="#330000"/><text x="14" y="19" class="at" fill="#ff9a00">Ai</text></svg></div>
    <div class="tk"><svg width="30" height="30"><rect width="30" height="30" rx="5" fill="#470137"/><text x="15" y="21" class="at" fill="#ff61f6">Xd</text></svg></div>
    <div class="tk"><svg width="28" height="28"><rect width="28" height="27" rx="5" fill="#00005b"/><text x="14" y="19" class="at" fill="#9999ff">Pr</text></svg></div>
    <div class="tk"><svg width="30" height="30"><rect width="30" height="30" rx="1" fill="#252525"/><path d="M15 4h-4a3.700 3.700 0 0 0 0 7.400h4z" fill="#f24e1e"/><path d="M15 4h4a3.700 3.700 0 0 1 0 7.400h-4z" fill="#ff7262"/><path d="M15 11.400h-4a3.700 3.700 0 0 0 0 7.400h4z" fill="#a259ff"/><circle cx="18.700" cy="15" r="3.700" fill="#1abcfe"/><path d="M15 18.800h-4a3.700 3.700 0 1 0 4 3.700z" fill="#0acf83"/></svg></div>
    <div class="tk"><svg width="29" height="28"><rect width="29" height="27" rx="5" fill="#e8eef4"/><path d="M7 0v27M22 0v27M0 5h29M0 22h29" stroke="#b8d4ee" stroke-width="1"/><text x="14.500" y="19" class="at sm" fill="#2b7de9">LrC</text></svg></div>
    <div class="tk"><svg width="29" height="28" viewBox="0 0 29 28"><path d="M0 0h29v28H0z" fill="#fafcff"/><path d="M14.500 9v10M9.500 14h10M14.500 1.500v6M11.500 4.500h6M14.500 20.500v6M11.500 23.500h6M3 14h5M5.500 11.500v5M21 14h5M23.500 11.500v5M5.500 7.500h5M8 5v5M18.500 7.500h5M21 5v5M5.500 20.500h5M8 18v5M18.500 20.500h5M21 18v5" stroke="#2f6d99" stroke-width="1.300"/></svg></div>
    <div class="tk"><svg width="27" height="28" viewBox="0 0 27 28"><path d="M1 4l19-3 6 4v20l-20 2-5-6z" fill="#fff" stroke="#111" stroke-width="2"/><path d="M1 4l5 4 20-3M6 8v19" fill="none" stroke="#111" stroke-width="2"/><text x="15.500" y="22.500" font-family="Liberation Serif" font-weight="700" font-size="17" text-anchor="middle" fill="#111">N</text></svg></div>
    <div class="tk run"><svg width="30" height="29" viewBox="0 0 30 29"><path d="M3 4h16v16a8 3 0 0 1-16 0z" fill="#ffd83b"/><ellipse cx="11" cy="4" rx="8" ry="3.500" fill="#f2a35e"/><path d="M21 2h7v7M9 27H1v-7" fill="none" stroke="#3fa043" stroke-width="2.500"/><path d="M15 17l11 10M25 17L14 27" stroke="#f07316" stroke-width="2.300"/><path d="M12 19l6-4M22 14l5 5" stroke="#f07316" stroke-width="3"/></svg></div>
    <div class="tk"><svg width="27" height="27" viewBox="0 0 27 27"><path d="M0 0h27v27H0z" fill="#1c68e8"/><path d="M0 0h18L0 16z" fill="#fe315d"/><path d="M27 10v17H10z" fill="#21a0f5"/><path d="M14 0h8L0 24v-8z" fill="#b74af7"/><path d="M4 4h19v19H4z" fill="#0b0014"/><text x="6" y="13" font-family="Liberation Mono" font-weight="700" font-size="9" fill="#fff">IJ</text><path d="M6 19h7" stroke="#fff" stroke-width="1.400"/></svg></div>
    <div class="tk"><svg width="30" height="30" viewBox="0 0 30 30"><path d="M0 0h30v30H0z" fill="#0078d7"/><path d="M15 5h7v20h-7z" fill="#e0a008"/><path d="M11 10h7v15h-7z" fill="#f2c430"/><path d="M6.500 15h7v10h-7z" fill="#fbe384"/></svg></div>
    <div class="tk run"><svg width="23" height="30" viewBox="0 0 23 30"><path d="M0 3h23v23H0z" fill="#3fbfe0"/><path d="M0 27h23v3H0z" fill="#a5561c"/><path d="M0 26h23v1.500H0z" fill="#fff"/><path d="M4 9.500h14M4 14h14M4 19h14" stroke="#0b5f80" stroke-width="2"/><path d="M3.500 0v4M7.500 0v4M11.500 0v4M15.500 0v4M19.500 0v4" stroke="#0b5f80" stroke-width="2"/></svg></div>
    <div class="tk act"><svg width="28" height="30" viewBox="0 0 28 30"><path d="M12 0h11v29H12z" fill="#dba30c"/><path d="M6 7h11v22H6z" fill="#f2c430"/><path d="M0 15h11v14H0z" fill="#fbe172"/><rect x="13" y="20" width="14" height="10" rx="2" fill="#333"/><text x="20" y="28" font-size="7.500" font-weight="700" font-family="Open Sans" text-anchor="middle" fill="#fff">RS</text></svg></div>
    <div class="tk run"><svg width="30" height="30" viewBox="0 0 30 30"><defs><linearGradient id="mp" x1="0" y1="0" x2=".6" y2="1"><stop offset="0" stop-color="#ff8a3c"/><stop offset="1" stop-color="#a65bb8"/></linearGradient></defs><circle cx="15" cy="15" r="15" fill="url(#mp)"/><circle cx="15" cy="15" r="12.500" fill="#333"/><path d="M11 8l10 7-10 7z" fill="#fff"/></svg></div>
  </div>
  <div class="tray">
    <svg width="16" height="9" viewBox="0 0 16 9"><path d="M1 8l7-7 7 7" fill="none" stroke="#1b1b1b" stroke-width="1.500"/></svg>
    <span class="eng">ENG</span>
    <svg width="21" height="20" viewBox="0 0 21 20"><g fill="none" stroke="#1b1b1b" stroke-width="1.300"><path d="M11 19a9 9 0 1 1 8-10M1.500 7h16M1.500 13h8M10 1C4 7 5 14 9 19M10 1c3 2 4 5 4.500 8"/><circle cx="15" cy="14.500" r="4.800"/><path d="M11.800 17.800l6.400-6.500"/></g></svg>
    <svg width="20" height="18" viewBox="0 0 20 18"><path d="M1 6.500h3L8 2.500v13l-4-4H1zM11 6c1.500 2 1.500 4 0 6M13.500 3.500c3 3 3 8 0 11M16 1.500c4.500 4.500 4.500 10.500 0 15" fill="none" stroke="#1b1b1b" stroke-width="1.200"/></svg>
    <svg width="21" height="13" viewBox="0 0 21 13"><rect x="1" y="1" width="16" height="11" rx="2.500" fill="none" stroke="#1b1b1b" stroke-width="1.500"/><path d="M3 3h8v7H3z" fill="#1b1b1b"/><path d="M18 4.500l2.500 1v3l-2.500 1z" fill="#1b1b1b"/></svg>
    <div class="clock">3:27 PM<br>2/12/2023</div>
    <b class="note">3</b>
  </div>
</div>
</body>
</html>
```
FILE: styles.css
```css
* { box-sizing: border-box; }
body { margin: 0; width: 1920px; height: 1080px; overflow: hidden; display: flex; flex-direction: column; background: #f3f2f1; color: #252423; font: 13.9px/20px "Open Sans", "Noto Sans", "DejaVu Sans", sans-serif; white-space: nowrap; }
svg { display: block; flex: none; }
h2, h3, p { margin: 0; font-weight: 400; }
i, em { font-style: normal; }
.defs { position: absolute; }
.ax { fill: none; stroke: #3b3a39; stroke-width: 1.6; }

.titlebar { height: 43px; flex: none; background: #3b3a38; color: #fff; display: flex; align-items: center; }
.quick { display: flex; gap: 19px; width: 126px; padding-left: 21px; }
.app-title { width: 670px; font-size: 14.3px; padding-top: 5px; }
.top-search { width: 500px; height: 30px; background: #cecccb; border: 1px solid #dddbda; border-radius: 2px; display: flex; align-items: center; gap: 15px; padding-left: 21px; margin-bottom: 1px; color: #1f5a4d; font-size: 16.2px; }
.top-search svg { color: #484644; }
.sign { width: 58px; margin-left: 362px; font-size: 14.4px; }
.avatar { width: 20px; height: 20px; border-radius: 50%; background: #f3f2f1; }
.win { display: flex; gap: 41px; margin-left: 40px; padding-top: 3px; }

.tabs { height: 45px; flex: none; display: flex; align-items: flex-start; font-size: 16.6px; line-height: 39px; color: #323130; }
.tabs span, .tabs b { height: 38px; flex: none; }
.t-file { width: 102px; padding: 1px 0 0 28px; }
.t-home { width: 86px; }
.t-ins { width: 83px; }
.t-mod { width: 112px; }
.tabs .t-view { width: 39px; border-bottom: 3px solid #117865; font-weight: 600; font-size: 16.4px; margin-right: 38px; color: #252423; }
.t-help { width: 55px; }
.tabs b { background: #fff; font-weight: 600; color: #10443b; text-align: center; font-size: 16.2px; }
.t-fmt { width: 95px; margin-right: 5px; }
.tabs .t-data { width: 124px; font-size: 16.5px; }

.ribbon { height: 112px; flex: none; display: flex; padding-bottom: 1px; position: relative; box-shadow: 0 2px 6px rgba(0,0,0,.16); z-index: 2; font-size: 13.7px; }
.grp { border-right: 1px solid #c8c6c4; display: flex; flex-direction: column; align-items: center; justify-content: space-between; padding-top: 3px; }
.glabel { font-size: 11.9px; line-height: 15px; color: #484644; }
.g-themes { width: 613px; padding: 10px 10px 0; }
.gallery { width: 592px; height: 77px; border: 1px solid #8a8886; background: #fff; display: flex; align-items: center; padding-left: 5px; gap: 10px; }
.thumb { width: 85px; height: 48px; border: 1.500px solid #252423; padding: 1px 3px; display: flex; flex-direction: column; margin-bottom: 1px; }
.thumb em { font-size: 12.500px; line-height: 17px; letter-spacing: 1px; height: 17px; }
.purple { background: linear-gradient(110deg, #474697, #8e51bb); color: #fff; }
.more { width: 21px; align-self: stretch; background: #f3f2f1; border-left: 1px solid #8a8886; display: flex; align-items: center; justify-content: center; margin-left: -5px; }
.g-scale { width: 79px; }
.g-mobile { width: 72px; padding-right: 1px; }
.g-opts { width: 152px; }
.g-panes { width: 351px; align-items: stretch; text-align: center; padding-left: 9px; }
.g-panes .glabel { padding-right: 8px; }
.rb { height: 90px; display: flex; flex-direction: column; align-items: center; text-align: center; padding-top: 3px; border: 1px solid transparent; }
.rb > svg { height: 38px; }
.rb > span { margin-top: 4px; }
.rb span svg { display: inline; vertical-align: 1px; }
.rb.on { background: #e1dfdd; border-color: #605e5c; }
.panes { display: flex; }
.w-fil { width: 51px; }
.w-book { width: 76px; }
.w-sel { width: 67px; }
.w-perf { width: 86px; }
.w-sync { width: 54px; }
.checks { width: 152px; padding: 4px 0 0 22px; display: flex; flex-direction: column; gap: 11px; }
.checks label { height: 20px; display: flex; align-items: center; gap: 5px; }
.checks i { width: 20px; height: 20px; border: 1px solid #8a8886; background: #fff; }
.collapse { margin: 97px 0 0 auto; transform: translateX(-6px); }

.work { height: 790px; flex: none; display: flex; }
.rail { width: 51px; border-right: 1px solid #d2d0ce; }
.ritem { height: 50px; display: flex; align-items: center; padding: 0 0 2px 15px; }
.ritem.on { border-left: 3px solid #117865; padding: 0 0 0 13px; }
.center { width: 1417px; display: flex; flex-direction: column; }
.upper { height: 746px; display: flex; }
.canvas { width: 1166px; background: #fff; position: relative; overflow: hidden; }
.pageframe { position: absolute; left: 11px; top: 9px; width: 1155px; height: 722px; background: repeating-linear-gradient(90deg, #484644 0 2px, transparent 2px 4px) 0 0/100% 2px no-repeat, repeating-linear-gradient(#484644 0 2px, transparent 2px 4px) 0 0/2px 100% no-repeat; }
.visual { position: absolute; background: #323232; border: 2px solid #2a2a2a; border-radius: 3px; box-shadow: 0 0 0 1px #d8d8d8, 6px 8px 12px rgba(0,0,0,.4); }
.visual h2 { background: #41a4ff; color: #fff; font: 27px/30px "Liberation Sans", Arial, sans-serif; text-align: center; height: 30px; letter-spacing: -.15px; overflow: hidden; }
.v-count { left: 14px; top: 12px; width: 278px; height: 209px; }
.v-chart { left: 294px; top: 13px; width: 628px; height: 210px; }
.v-chart svg { margin: 1px 0 0 -1px; }
.big { color: #fff; font: 500 55px/60px Roboto, sans-serif; text-align: center; padding: 66px 0 0 2px; transform: scaleX(.9); }
.ct text { fill: #fff; font: 11.600px "Open Sans", sans-serif; text-anchor: middle; }
.ct.bold text { font-weight: 700; font-size: 10.300px; }
.vbtn { position: absolute; height: 28px; background: #fff; top: 206px; width: 29px; display: flex; align-items: center; justify-content: center; color: #797775; padding-top: 2px; }
.vbtn.dark { background: #323232; top: 223px; height: 30px; color: #c8c6c4; align-items: flex-start; padding-top: 8px; }
.b1 { left: 227px; width: 30px; }
.b2 { left: 262px; }
.b3 { left: 842px; }
.b4 { left: 876px; width: 30px; padding-top: 4px; }
.b5 { left: 911px; padding-bottom: 2px; }
.tablevis { position: absolute; left: 14px; top: 236px; width: 927px; height: 471px; background: #fff; border: 1px solid #b8b8b8; padding: 3px 3px 3px 4px; display: flex; flex-direction: column; font-size: 12.55px; }
.tv-main { height: 453px; display: flex; }
.grid { width: 909px; height: 433px; border-bottom: 2px solid #118dff; overflow: hidden; }
.row { display: grid; grid-template-columns: 281px 232px 268px 128px; height: 20.93px; line-height: 20px; }
.row > span { overflow: hidden; padding-left: 7px; }
.row > span:first-child { padding-left: 0; }
.row > span:nth-child(3) { letter-spacing: .08px; }
.row > span:last-child { padding: 3px 0 0 58px; }
.row.head { height: 30px; line-height: 26px; border-bottom: 1.500px solid #66b2f5; }
.row.head > span:last-child { padding: 0 0 0 8px; }
.rows .row { padding-top: 1px; }
.rows .row:nth-child(even) { background: #ececec; box-shadow: inset 0 -1px #e0e0e0; }
.row svg.emo { display: inline-block; vertical-align: -2px; margin-left: 2px; }
.ar { font-family: "DejaVu Sans", sans-serif; font-size: 12.7px; unicode-bidi: isolate; direction: ltr; line-height: 1; letter-spacing: 0; }
.cut { margin-left: -5px; }
.vs { width: 10px; background: #f0f0f0; display: flex; flex-direction: column; padding: 11px 0 10px; }
.vs i { height: 318px; margin: 11px 0 auto; background: #cdcdcd; }
.hs { width: 909px; height: 10px; background: #f0f0f0; display: flex; align-items: center; padding: 0 10px 0 9px; }
.hs i { width: 499px; height: 10px; background: #cdcdcd; margin: 0 auto 0 368px; }
.handles { position: absolute; left: -4px; top: -4px; }
.cscroll { position: absolute; left: 0; top: 733px; width: 1051px; height: 11px; border-radius: 6px; background: #c8c8c8; }

.ph { display: flex; align-items: center; height: 50px; }
.ph h3 { font-size: 18.1px; font-weight: 600; color: #252423; flex: 1; letter-spacing: -.1px; }
.filters { width: 251px; background: #fff; border-left: 1px solid #a19f9d; display: flex; flex-direction: column; overflow: hidden; }
.fh { padding: 0 13px 0 14px; color: #252423; }
.fh h3 { padding-left: 9px; }
.fh .eye { margin-right: 21px; margin-bottom: 6px; }
.fh > svg:last-child { margin-bottom: 5px; }
.sbox { border: 1px solid #a19f9d; border-radius: 2px; background: #fff; display: flex; align-items: center; font-size: 15.700px; flex: none; }
.filters .sbox { width: 225px; height: 38px; margin: 7px 0 5px 10px; padding-left: 12px; gap: 11px; }
.flist { border-top: 1px solid #a19f9d; position: relative; padding-left: 10px; flex: 1; display: flex; flex-direction: column; gap: 8.500px; overflow: hidden; }
.fl-head { height: 43px; flex: none; padding: 20px 15px 0 0; display: flex; justify-content: space-between; font-size: 14.150px; }
.fl-head svg { margin-top: 12px; }
.fc { width: 230px; height: 56px; flex: none; border: 1px solid #c8c6c4; border-radius: 2px; padding: 6px 10px; font-size: 14px; }
.fc p { line-height: 20px; height: 23px; }
.fscroll { position: absolute; right: 1px; top: 10px; width: 7px; height: 399px; background: #d8d6d4; border-radius: 4px; }
.pagebar { height: 44px; display: flex; align-items: center; }
.ptab { width: 95px; height: 44px; background: #fff; border-left: 1px solid #8a8886; border-bottom: 5px solid #117865; text-align: center; line-height: 43px; font-weight: 600; font-size: 13.900px; letter-spacing: -.1px; }
.plus { width: 49px; height: 40px; background: #117865; display: flex; align-items: center; justify-content: center; }

.viz { width: 226px; border-left: 1px solid #d8d6d4; display: flex; flex-direction: column; }
.viz .ph, .fields .ph { padding: 0 10px 0 10px; }
.bv { padding-left: 10px; margin-top: -2px; height: 24px; font-size: 14.500px; }
.modes { display: flex; justify-content: space-between; height: 40px; padding: 0 9px 0 10px; align-items: center; }
.mode { height: 40px; display: flex; align-items: center; justify-content: center; }
.mode.on { width: 40px; background: #d2d0ce; border-radius: 2px; }
.modes .mode:nth-child(3) { padding-right: 6px; }
.notch { margin-top: 5px; }
.icons { display: grid; grid-template-columns: repeat(6, 23px); grid-auto-rows: 23px; gap: 12px; padding: 15px 0 13px 14px; }
.icons > svg { width: 23px; height: 23px; }
.icons .sel { width: 29px; height: 29px; margin: -3px; padding: 3px; background: #d2d0ce; outline: 1px solid #8a8886; }
.icons b { font-size: 19.500px; line-height: 22px; color: #2088c8; font-weight: 700; padding-left: 3px; }
.icons b + b { padding-left: 0; }
.num { font: 10px "Open Sans", sans-serif; fill: #2b88d8; text-anchor: middle; }
.wells { border-top: 1px solid #d2d0ce; flex: 1; position: relative; padding-left: 5px; }
.wl { padding: 12px 0 0 10px; height: 37px; font-size: 14.200px; }
.drop { width: 213px; height: 321px; border: 1px dashed #c8c6c4; background: #fff; padding: 5px 3px; display: flex; flex-direction: column; gap: 2px; }
.fp { width: 205px; height: 28.300px; flex: none; background: #edebea; border: 1px solid #c0bebc; border-radius: 2px; padding: 0 5px; }
.fp.multi { height: 123px; }
.fp > div { height: 27px; display: flex; align-items: center; gap: 8px; }
.fp span { flex: 1; }
.fp > div.sub { height: 24px; padding-left: 10px; }
.fp.multi > .sub:nth-child(2) { margin-top: -2px; }
.drill { padding-left: 10px; margin-top: 14px; font-weight: 600; font-size: 14.200px; letter-spacing: -.05px; color: #484644; }
.cross { padding: 11px 0 0 10px; display: flex; align-items: center; justify-content: space-between; width: 213px; font-size: 14.100px; }
.toggle { width: 40px; height: 20px; border: 1px solid #605e5c; border-radius: 10px; background: #fff; display: flex; align-items: center; gap: 2px; font-size: 11px; padding-left: 5px; color: #605e5c; }
.toggle i { width: 10px; height: 10px; border-radius: 50%; background: #605e5c; }
.wscroll { position: absolute; right: 0; top: 3px; width: 7px; height: 367px; border-radius: 4px; background: #cfcdcb; }

.fields { width: 226px; border-left: 1px solid #d8d6d4; }
.fields .sbox { width: 215px; height: 33px; border-color: #797775; margin: 7px 0 0 5px; padding-left: 9px; gap: 8px; color: #484644; }
.tree { display: flex; align-items: center; padding: 11px 0 0 11px; font-size: 14px; }
.tree .ti { margin: 7px 0 0 8px; }
.tree span { margin-left: -1px; }

.status { height: 30px; flex: none; border-top: 1px solid #d8d6d4; display: flex; align-items: center; justify-content: space-between; padding: 0 29px 0 6px; color: #484644; font-size: 14.500px; }
.zoomer { display: flex; align-items: center; }
.zoomer b { font-size: 19px; font-weight: 600; width: 12px; text-align: center; }
.zoomer b:first-child { width: 14px; }
.zoomer b:nth-of-type(2) { width: 24px; }
.zoomer span { width: 67px; padding-left: 14px; font-size: 14.200px; color: #605e5c; }

.taskbar { height: 60px; flex: none; border-top: 1.500px solid #adb3ba; background: linear-gradient(90deg, #dfecf6 0, #dfebf6 20%, #d2dff6 33%, #d8dcf0 45%, #d3e0f6 60%, #d8dced 69%, #dce8f4 80%, #dfecf5 100%); display: flex; align-items: center; color: #1b1b1b; }
.weather { width: 344px; display: flex; align-items: center; gap: 9px; padding: 0 0 1px 24px; font-size: 14.6px; }
.weather span { color: #484f57; }
.tk { width: 55px; height: 58px; flex: none; display: flex; align-items: center; justify-content: center; position: relative; }
.tk .up { margin: -7px 0 0 7px; }
.win11 { width: 60px; padding-right: 5px; }
.pill { width: 123px; height: 38px; border-radius: 19px; background: #f2f6fd; border-bottom: 1px solid #d3d9e4; display: flex; align-items: center; justify-content: center; gap: 7px; font-size: 14.3px; }
.apps { display: flex; padding-left: 5px; }
.run::after, .act::after { content: ""; position: absolute; bottom: 4px; left: 24px; width: 8px; height: 4px; border-radius: 2px; background: #7d838c; }
.act::before { content: ""; position: absolute; left: 3px; top: 5px; width: 48px; height: 49px; border-radius: 4px; background: #f0f4fb; border: 1px solid #e2e6ee; }
.act svg { position: relative; }
.act::after { width: 20px; left: 17px; background: #0078d4; }
.at { font: 700 16px "Open Sans", sans-serif; text-anchor: middle; }
.at.sm { font-size: 14px; }
.tray { display: flex; align-items: center; margin-left: 30px; font-size: 14.400px; padding-bottom: 1px; }
.eng { width: 28px; margin: 0 23px 0 21px; font-size: 14px; }
.tray svg + svg { margin-left: 10px; }
.clock { width: 86px; text-align: right; }
.note { width: 20px; height: 20px; border-radius: 50%; background: #0067c0; color: #fff; margin-left: 14px; text-align: center; font-size: 11px; font-weight: 600; }
```
